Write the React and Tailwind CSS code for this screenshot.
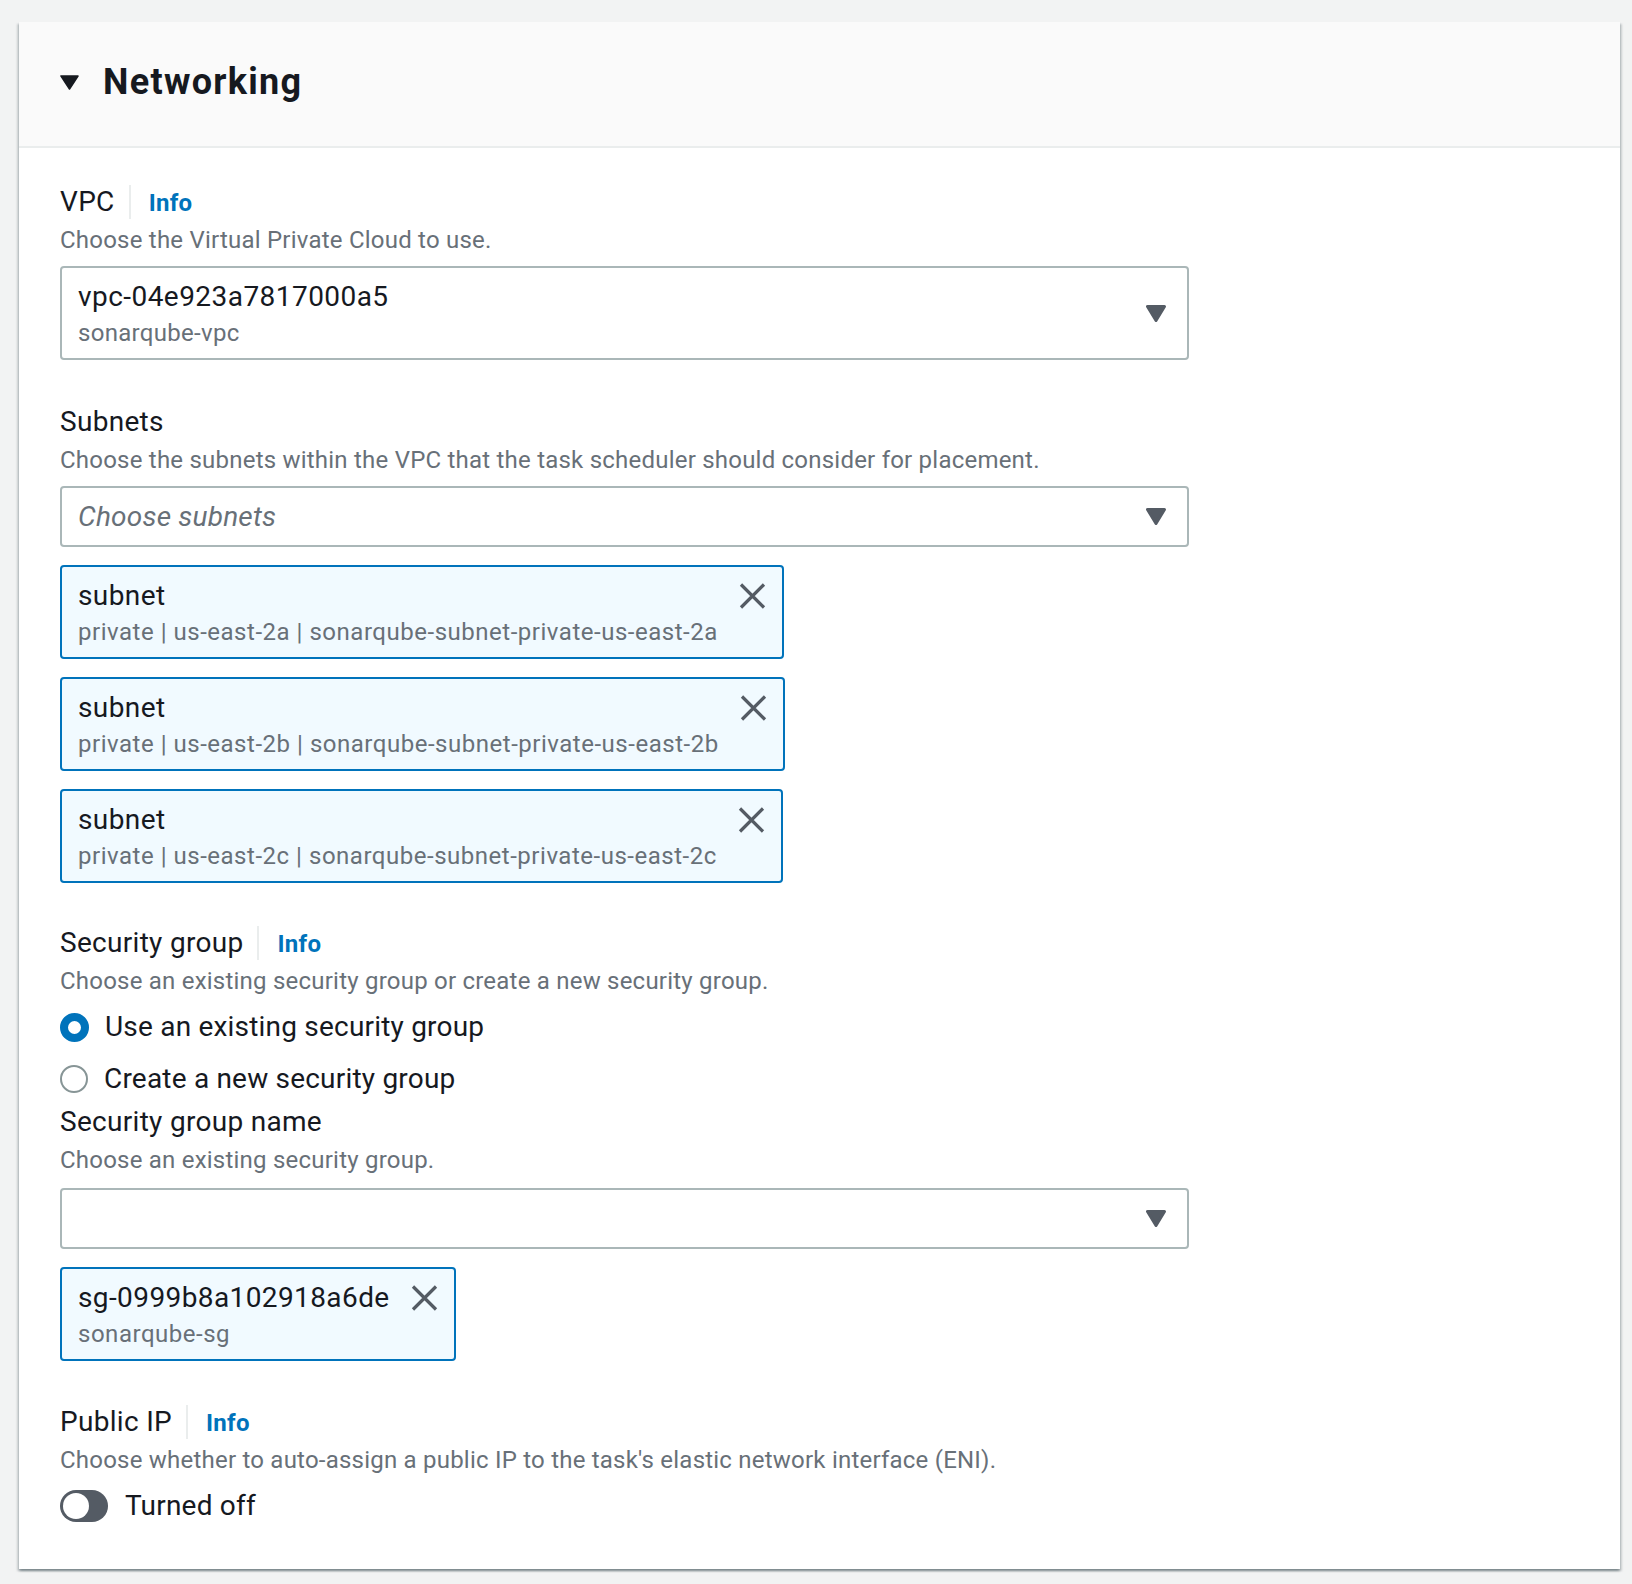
import React from 'react';

// Small drawn glyphs
const HeadingCaret = () => (
  <svg width="19" height="15" viewBox="0 0 19 15" className="shrink-0">
    <path d="M1 1 L18 1 L9.5 14 Z" fill="#16191f" stroke="#16191f" strokeWidth="1.5" strokeLinejoin="round" />
  </svg>
);

const SelectCaret = () => (
  <svg width="20" height="17" viewBox="0 0 20 17" className="shrink-0">
    <path d="M1.5 1.5 L18.5 1.5 L10 15.5 Z" fill="#545b64" stroke="#545b64" strokeWidth="3" strokeLinejoin="round" />
  </svg>
);

const CloseIcon = () => (
  <svg width="27" height="26" viewBox="0 0 27 26" className="ml-[21px] mt-[7px] shrink-0">
    <path d="M2 1.5 L25 24.5 M25 1.5 L2 24.5" stroke="#545b64" strokeWidth="3.2" />
  </svg>
);

const FieldLabel = ({ children, info }) => (
  <div className="flex h-10 items-baseline">
    <span className="text-[28px] leading-10 tracking-[0.3px] text-[#16191f]">{children}</span>
    {info && (
      <>
        <span className="ml-[14px] h-[34px] w-[2px] self-center bg-[#eaeded]" />
        <span className="ml-[18px] text-[24px] font-bold leading-10 tracking-[0.3px] text-[#0073bb]">Info</span>
      </>
    )}
  </div>
);

const Description = ({ children }) => (
  <p className="mt-[2px] text-[24px] leading-8 tracking-[0.22px] text-[#687078]">{children}</p>
);

const Token = ({ title, detail }) => (
  <div className="flex w-fit items-start rounded-[4px] border-2 border-[#0073bb] bg-[#f1faff] py-[9px] pl-4 pr-4">
    <div>
      <div className="text-[28px] leading-10 tracking-[0.4px] text-[#16191f]">{title}</div>
      <div className="text-[24px] leading-8 tracking-[0.52px] text-[#687078]">{detail}</div>
    </div>
    <CloseIcon />
  </div>
);

const Radio = ({ checked, label }) => (
  <div className="flex h-10 items-center gap-4">
    {checked ? (
      <span className="h-[29px] w-[29px] shrink-0 rounded-full border-[8px] border-[#0073bb] bg-white" />
    ) : (
      <span className="h-[28px] w-[28px] shrink-0 rounded-full border-2 border-[#879596] bg-white" />
    )}
    <span className="text-[28px] leading-10 tracking-[0.2px] text-[#16191f]">{label}</span>
  </div>
);

const subnets = [
  'private | us-east-2a | sonarqube-subnet-private-us-east-2a',
  'private | us-east-2b | sonarqube-subnet-private-us-east-2b',
  'private | us-east-2c | sonarqube-subnet-private-us-east-2c',
];

export default function App() {
  return (
    <div className="min-h-[1584px] bg-[#f2f3f3] pl-[19px] pt-[22px] font-['Roboto',sans-serif] text-[#16191f]">
      <div className="w-[1601px] bg-white shadow-[0_2px_2px_0_rgba(0,28,36,0.3),2px_2px_2px_0_rgba(0,28,36,0.15),-2px_2px_2px_0_rgba(0,28,36,0.15)]">
        {/* Header */}
        <div className="flex h-[126px] items-center gap-6 border-b-2 border-[#eaeded] bg-[#fafafa] pb-1 pl-[41px]">
          <HeadingCaret />
          <h2 className="text-[36px] font-bold leading-[48px] tracking-[1.3px]">Networking</h2>
        </div>

        <div className="pl-[41px] pt-[34px] pb-[43px]">
          {/* VPC */}
          <FieldLabel info>VPC</FieldLabel>
          <Description>Choose the Virtual Private Cloud to use.</Description>
          <div className="mt-[10px] flex w-[1129px] items-center justify-between rounded-[4px] border-2 border-[#aab7b8] bg-white py-[9px] pl-4 pr-[21px]">
            <div>
              <div className="text-[28px] leading-10 tracking-[0.45px]">vpc-04e923a7817000a5</div>
              <div className="text-[24px] leading-8 tracking-[0.3px] text-[#687078]">sonarqube-vpc</div>
            </div>
            <SelectCaret />
          </div>

          {/* Subnets */}
          <div className="mt-[42px]">
            <FieldLabel>Subnets</FieldLabel>
            <Description>Choose the subnets within the VPC that the task scheduler should consider for placement.</Description>
            <div className="mt-[10px] flex h-[61px] w-[1129px] items-center justify-between rounded-[4px] border-2 border-[#aab7b8] bg-white pl-4 pr-[21px]">
              <span className="text-[28px] italic leading-10 tracking-[0.2px] text-[#687078]">Choose subnets</span>
              <SelectCaret />
            </div>
            <div className="mt-[18px] flex flex-col gap-[18px]">
              {subnets.map((s, i) => (
                <Token key={i} title="subnet" detail={s} />
              ))}
            </div>
          </div>

          {/* Security group */}
          <div className="mt-[40px]">
            <FieldLabel info>Security group</FieldLabel>
            <Description>Choose an existing security group or create a new security group.</Description>
            <div className="mt-[10px] flex flex-col gap-3">
              <Radio checked label="Use an existing security group" />
              <Radio label="Create a new security group" />
            </div>
            <div className="mt-[3px]">
              <FieldLabel>Security group name</FieldLabel>
              <Description>Choose an existing security group.</Description>
            </div>
            <div className="mt-[12px] flex h-[61px] w-[1129px] items-center justify-end rounded-[4px] border-2 border-[#aab7b8] bg-white pr-[21px]">
              <SelectCaret />
            </div>
            <div className="mt-[18px]">
              <Token title="sg-0999b8a102918a6de" detail="sonarqube-sg" />
            </div>
          </div>

          {/* Public IP */}
          <div className="mt-[41px]">
            <FieldLabel info>Public IP</FieldLabel>
            <Description>Choose whether to auto-assign a public IP to the task's elastic network interface (ENI).</Description>
            <div className="mt-[10px] flex h-10 items-center gap-[17px]">
              <span className="flex h-[32px] w-[48px] items-center rounded-full bg-[#545b64] p-[3px]">
                <span className="h-[26px] w-[26px] rounded-full bg-white" />
              </span>
              <span className="text-[28px] leading-10 tracking-[0.2px]">Turned off</span>
            </div>
          </div>
        </div>
      </div>
    </div>
  );
}
